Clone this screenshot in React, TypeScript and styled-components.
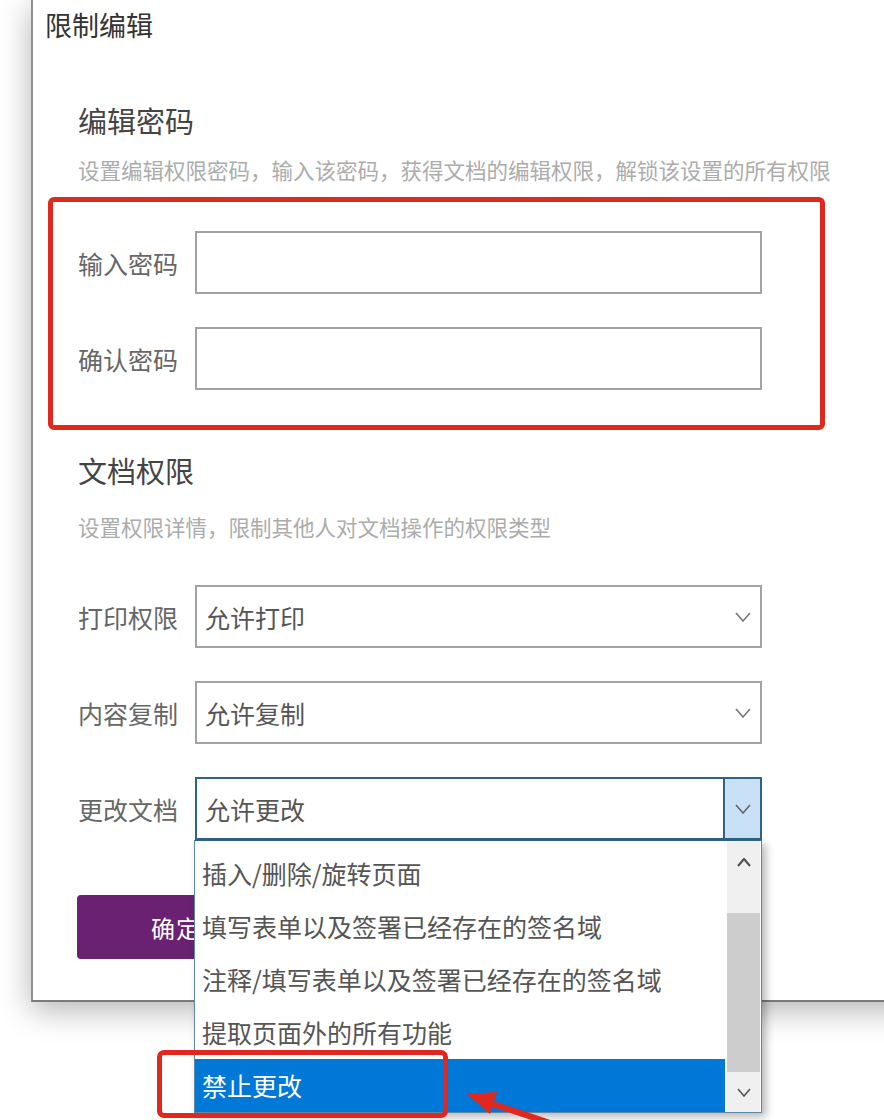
import styled, { createGlobalStyle } from 'styled-components';

const GlobalStyle = createGlobalStyle`
  html, body {
    margin: 0;
    padding: 0;
    background: #fff;
  }
  body {
    font-family: 'Noto Sans CJK SC', 'Noto Sans', sans-serif;
  }
`;

const Page = styled.div`
  position: relative;
  width: 884px;
  height: 1120px;
  overflow: hidden;
  background: #fff;
`;

const Dialog = styled.div`
  margin-left: 31px;
  width: 900px;
  box-sizing: border-box;
  padding: 0 0 41px 12px;
  background: #fff;
  border-left: 2px solid #8e8e8e;
  border-bottom: 2px solid #7b7b7b;
  box-shadow: 0 8px 30px rgba(0, 0, 0, 0.3);
`;

const DialogTitle = styled.div`
  height: 50px;
  line-height: 50px;
  font-size: 27px;
  color: #333;
`;

const Body = styled.div`
  display: flex;
  flex-direction: column;
  align-items: flex-start;
  margin-left: 33px;
`;

const SectionTitle = styled.div<{ $top: number }>`
  margin-top: ${(p) => p.$top}px;
  height: 40px;
  line-height: 40px;
  font-size: 29px;
  color: #444;
`;

const Hint = styled.div<{ $top: number }>`
  margin-top: ${(p) => p.$top}px;
  height: 30px;
  line-height: 30px;
  font-size: 21.5px;
  color: #acacac;
  white-space: nowrap;
`;

const MarkedGroup = styled.div`
  margin: 12px 0 0 -30px;
  width: 777px;
  box-sizing: border-box;
  padding: 29px 0 35px 25px;
  border: 5px solid #e0281f;
  border-radius: 6px;
  display: flex;
  flex-direction: column;
  gap: 33px;
`;

const FieldList = styled.div`
  margin-top: 43px;
  display: flex;
  flex-direction: column;
  gap: 33px;
`;

const Field = styled.div`
  display: flex;
  align-items: center;
`;

const FieldLabel = styled.div`
  width: 117px;
  font-size: 25px;
  color: #666;
  white-space: nowrap;
`;

const TextBox = styled.input`
  width: 567px;
  height: 63px;
  box-sizing: border-box;
  margin: 0;
  border: 2px solid #a2a2a2;
  background: #fff;
  outline: none;
`;

const SelectBox = styled.div<{ $open?: boolean }>`
  position: relative;
  width: 567px;
  height: 63px;
  box-sizing: border-box;
  border: 2px solid ${(p) => (p.$open ? '#2f6486' : '#a2a2a2')};
  display: flex;
  align-items: stretch;
  background: #fff;
`;

const SelectValue = styled.div`
  flex: 1;
  display: flex;
  align-items: center;
  padding-left: 8px;
  font-size: 25px;
  color: #555;
`;

const ArrowCell = styled.div<{ $open?: boolean }>`
  width: 35px;
  display: flex;
  align-items: center;
  justify-content: center;
  background: ${(p) => (p.$open ? '#c9e1f6' : 'transparent')};
  border-left: 2px solid ${(p) => (p.$open ? '#2f6486' : 'transparent')};
`;

const ListPopup = styled.div`
  position: absolute;
  z-index: 10;
  top: calc(100% + 2px);
  left: -3px;
  width: 568px;
  height: 273px;
  box-sizing: border-box;
  border: 1px solid #5d89a6;
  border-top-color: #2f6486;
  background: #fff;
  display: flex;
  box-shadow: 4px 4px 8px rgba(0, 0, 0, 0.28);
`;

const Options = styled.div`
  flex: 1;
  padding-top: 6px;
  display: flex;
  flex-direction: column;
`;

const Option = styled.div<{ $selected?: boolean }>`
  height: 53px;
  line-height: 53px;
  padding-left: 7px;
  margin-right: 2px;
  font-size: 25px;
  white-space: nowrap;
  color: ${(p) => (p.$selected ? '#fff' : '#555')};
  background: ${(p) => (p.$selected ? '#0078d7' : 'transparent')};
`;

const Scrollbar = styled.div`
  width: 33px;
  margin-right: 1px;
  background: #f0f0f0;
  display: flex;
  flex-direction: column;
`;

const ScrollButton = styled.div<{ $h: number }>`
  height: ${(p) => p.$h}px;
  display: flex;
  align-items: center;
  justify-content: center;
`;

const ScrollTrack = styled.div`
  flex: 1;
  padding-top: 30px;
  display: flex;
  flex-direction: column;
`;

const ScrollThumb = styled.div`
  flex: 1;
  background: #cdcdcd;
`;

const ConfirmButton = styled.button`
  margin-top: 55px;
  margin-left: -1px;
  width: 198px;
  height: 64px;
  border: none;
  border-radius: 4px;
  background: #6b2171;
  color: #fff;
  font-family: inherit;
  font-size: 24px;
  letter-spacing: 1px;
`;

const Callout = styled.div`
  position: absolute;
  z-index: 20;
  left: 157px;
  top: 1050px;
  width: 291px;
  height: 68px;
  box-sizing: border-box;
  border: 5px solid #e0281f;
  border-radius: 7px;
`;

const CalloutArrow = styled.svg`
  position: absolute;
  z-index: 20;
  left: 450px;
  top: 1078px;
`;

const Chevron = ({ up, color = '#777', w = 16 }: { up?: boolean; color?: string; w?: number }) => (
  <svg width={w} height={w / 2 + 2} viewBox={`0 0 ${w} ${w / 2 + 2}`}>
    <polyline
      points={up ? `1,${w / 2 + 1} ${w / 2},1 ${w - 1},${w / 2 + 1}` : `1,1 ${w / 2},${w / 2 + 1} ${w - 1},1`}
      fill="none"
      stroke={color}
      strokeWidth={up ? 2.2 : 1.6}
    />
  </svg>
);

const changeOptions = [
  '插入/删除/旋转页面',
  '填写表单以及签署已经存在的签名域',
  '注释/填写表单以及签署已经存在的签名域',
  '提取页面外的所有功能',
  '禁止更改',
];

export default function App() {
  return (
    <Page>
      <GlobalStyle />
      <Dialog>
        <DialogTitle>限制编辑</DialogTitle>
        <Body>
          <SectionTitle $top={50}>编辑密码</SectionTitle>
          <Hint $top={15}>设置编辑权限密码，输入该密码，获得文档的编辑权限，解锁该设置的所有权限</Hint>
          <MarkedGroup>
            <Field>
              <FieldLabel>输入密码</FieldLabel>
              <TextBox type="password" readOnly />
            </Field>
            <Field>
              <FieldLabel>确认密码</FieldLabel>
              <TextBox type="password" readOnly />
            </Field>
          </MarkedGroup>

          <SectionTitle $top={20}>文档权限</SectionTitle>
          <Hint $top={22}>设置权限详情，限制其他人对文档操作的权限类型</Hint>
          <FieldList>
            <Field>
              <FieldLabel>打印权限</FieldLabel>
              <SelectBox>
                <SelectValue>允许打印</SelectValue>
                <ArrowCell>
                  <Chevron />
                </ArrowCell>
              </SelectBox>
            </Field>
            <Field>
              <FieldLabel>内容复制</FieldLabel>
              <SelectBox>
                <SelectValue>允许复制</SelectValue>
                <ArrowCell>
                  <Chevron />
                </ArrowCell>
              </SelectBox>
            </Field>
            <Field>
              <FieldLabel>更改文档</FieldLabel>
              <SelectBox $open>
                <SelectValue>允许更改</SelectValue>
                <ArrowCell $open>
                  <Chevron color="#666" />
                </ArrowCell>
                <ListPopup>
                  <Options>
                    {changeOptions.map((o, i) => (
                      <Option key={o} $selected={i === changeOptions.length - 1}>
                        {o}
                      </Option>
                    ))}
                  </Options>
                  <Scrollbar>
                    <ScrollButton $h={42}>
                      <Chevron up color="#555" w={14} />
                    </ScrollButton>
                    <ScrollTrack>
                      <ScrollThumb />
                    </ScrollTrack>
                    <ScrollButton $h={40}>
                      <Chevron color="#555" w={14} />
                    </ScrollButton>
                  </Scrollbar>
                </ListPopup>
              </SelectBox>
            </Field>
          </FieldList>

          <ConfirmButton>确定</ConfirmButton>
        </Body>
      </Dialog>

      <Callout />
      <CalloutArrow width="120" height="42" viewBox="0 0 120 42">
        <line x1="40" y1="25" x2="115" y2="50" stroke="#e0281f" strokeWidth="6" />
        <polygon points="17,16 47,14 40,36" fill="#e0281f" />
      </CalloutArrow>
    </Page>
  );
}
